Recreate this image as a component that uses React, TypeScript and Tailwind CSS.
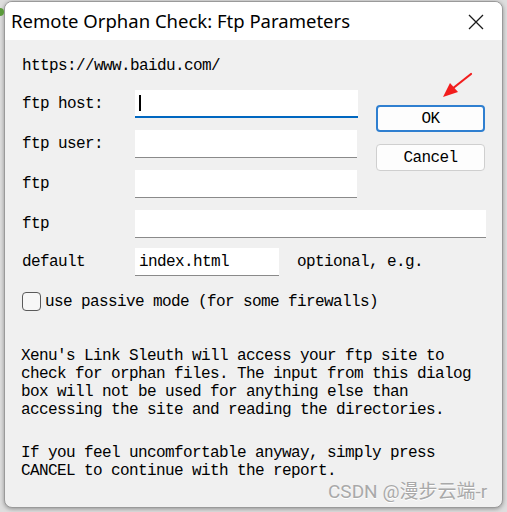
import React from "react";

const mono = { fontFamily: '"Liberation Mono", "DejaVu Sans Mono", monospace' };

function Field({ label, width, value, focused }: { label: string; width: string; value?: string; focused?: boolean }) {
  return (
    <div className="flex h-[28px] items-center">
      <div className="w-[113px] shrink-0">{label}</div>
      <div
        className={`relative flex h-[28px] items-center bg-white pl-[4px] ${width} ${
          focused ? "border-b-2 border-[#0067c0]" : "border-b border-[#8a8a8a]"
        }`}
      >
        {focused && <div className="h-[16px] w-[2px] bg-black" />}
        {value && <span>{value}</span>}
      </div>
    </div>
  );
}

export default function App() {
  return (
    <div className="relative h-[512px] w-[507px] overflow-hidden bg-[#dedede]">
      <div className="absolute left-0 top-[8px] h-[8px] w-[4px] rounded-r-full bg-[#5a9a3a]" />
      <div className="ml-[4px] mt-[1px] flex h-[507px] w-[499px] flex-col overflow-hidden rounded-[8px] border border-[#9a9a9a] bg-[#f0f0f0] shadow-[0_1px_4px_rgba(0,0,0,0.35)]">
        {/* title bar */}
        <div
          className="flex h-[38px] shrink-0 items-center justify-between bg-white pl-[6px] pr-[18px] text-[18.5px] text-black"
          style={{ fontFamily: '"Noto Sans", "Open Sans", sans-serif' }}
        >
          <span>Remote Orphan Check: Ftp Parameters</span>
          <svg width="16" height="16" viewBox="0 0 16 16" className="mt-[1px]">
            <path d="M1 1 L15 15 M15 1 L1 15" stroke="#1a1a1a" strokeWidth="1.3" />
          </svg>
        </div>
        {/* body */}
        <div className="relative flex flex-col pl-[17px] text-[16px] leading-[18px] tracking-[-0.6px] text-black" style={mono}>
          <div className="mt-[17px] h-[18px]">https://www.baidu.com/</div>
          <div className="mt-[15px] flex items-start">
            <div className="flex flex-col gap-[12px]">
              <Field label="ftp host:" width="w-[223px]" focused />
              <Field label="ftp user:" width="w-[222px]" />
            </div>
            <div className="-mb-[13px] ml-[18px] mt-[15px] flex flex-col gap-[12px]">
              <div className="flex h-[27px] w-[109px] items-center justify-center rounded-[4px] border-2 border-[#2f7fd0] bg-[#fdfdfd]">
                OK
              </div>
              <div className="flex h-[27px] w-[109px] items-center justify-center rounded-[4px] border border-[#cfcfcf] bg-[#fdfdfd]">
                Cancel
              </div>
            </div>
          </div>
          <div className="mt-[12px]">
            <Field label="ftp" width="w-[222px]" />
          </div>
          <div className="mt-[12px]">
            <Field label="ftp" width="w-[351px]" />
          </div>
          <div className="mt-[10px] flex items-center">
            <Field label="default" width="w-[144px]" value="index.html" />
            <span className="ml-[18px]">optional, e.g.</span>
          </div>
          <div className="mt-[16px] flex h-[19px] items-center">
            <div className="h-[19px] w-[19px] rounded-[4px] border border-[#5a5a5a] bg-[#f7f7f7]" />
            <span className="ml-[4px]">use passive mode (for some firewalls)</span>
          </div>
          <div className="mt-[36px] ml-[-1px]">
            <div>Xenu's Link Sleuth will access your ftp site to</div>
            <div>check for orphan files. The input from this dialog</div>
            <div>box will not be used for anything else than</div>
            <div>accessing the site and reading the directories.</div>
          </div>
          <div className="mt-[25px] ml-[-1px]">
            <div>If you feel uncomfortable anyway, simply press</div>
            <div>CANCEL to continue with the report.</div>
          </div>
        </div>
      </div>
      {/* red arrow annotation */}
      <svg className="absolute left-[438px] top-[70px]" width="40" height="32" viewBox="0 0 40 32">
        <path d="M33 4 L14 19" stroke="#f21d1d" strokeWidth="2.2" strokeLinecap="round" />
        <path d="M5 27 L12 13 L20 22 Z" fill="#f21d1d" />
      </svg>
      {/* watermark */}
      <div
        className="absolute left-[328px] top-[480px] text-[19px] leading-[24px] text-[#a9a9a9] [text-shadow:0_1px_0_#ffffff]"
        style={{ fontFamily: 'Roboto, "Noto Sans CJK SC", sans-serif' }}
      >
        CSDN @漫步云端-r
      </div>
    </div>
  );
}
